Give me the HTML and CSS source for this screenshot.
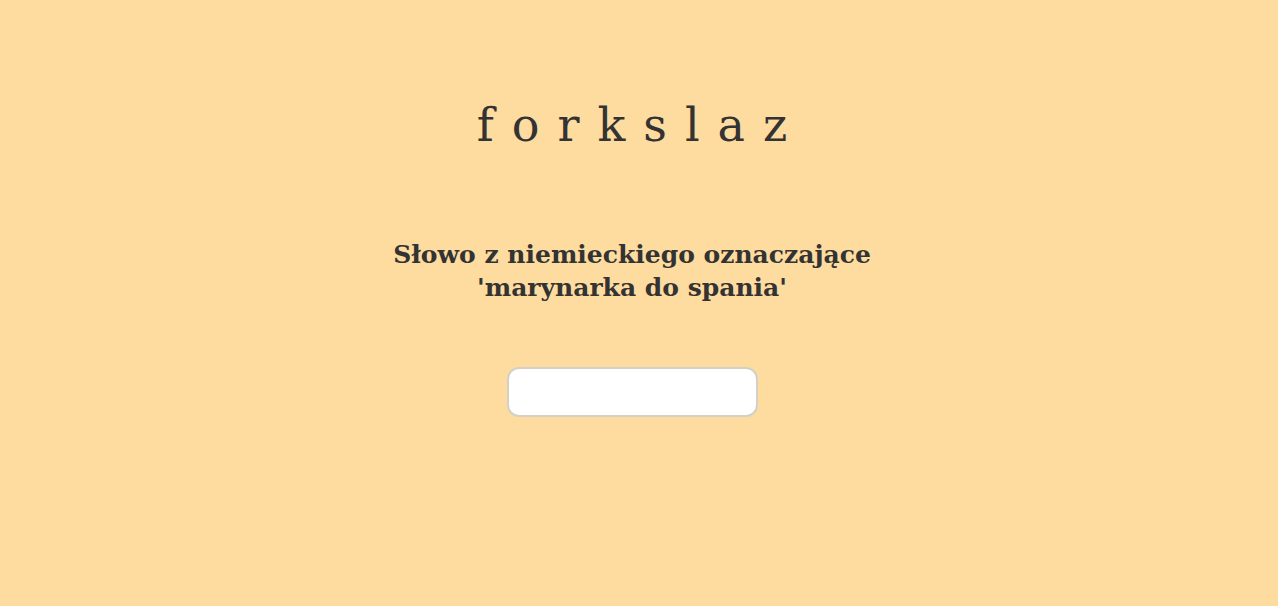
FILE: index.html
```html
<!DOCTYPE html>
<html lang="pl">
<head>
<meta charset="utf-8">
<title>forkslaz</title>
<link rel="stylesheet" href="styles.css">
</head>
<body>
<main class="page">
  <h1 class="title">forkslaz</h1>
  <p class="question">Słowo z niemieckiego oznaczające<br>'marynarka do spania'</p>
  <input class="answer" type="text" aria-label="odpowiedź">
</main>
</body>
</html>
```
FILE: styles.css
```css
html, body {
  margin: 0;
  height: 100%;
  background: #fedb9e;
}
body {
  font-family: "DejaVu Serif", "Liberation Serif", serif;
  color: #333333;
}
.page {
  display: flex;
  flex-direction: column;
  align-items: center;
  padding-top: 94px;
  padding-right: 14px;
}
.title {
  margin: 0;
  font-size: 46px;
  font-weight: 400;
  letter-spacing: 18px;
  padding-left: 18px;
  line-height: 62px;
}
.question {
  margin: 82px 0 0;
  font-size: 25px;
  font-weight: 600;
  line-height: 33px;
  text-align: center;
}
.answer {
  margin-top: 63px;
  width: 251px;
  height: 50px;
  box-sizing: border-box;
  border: 2px solid #d4d0c8;
  border-radius: 12px;
  background: #ffffff;
  outline: none;
}
```
